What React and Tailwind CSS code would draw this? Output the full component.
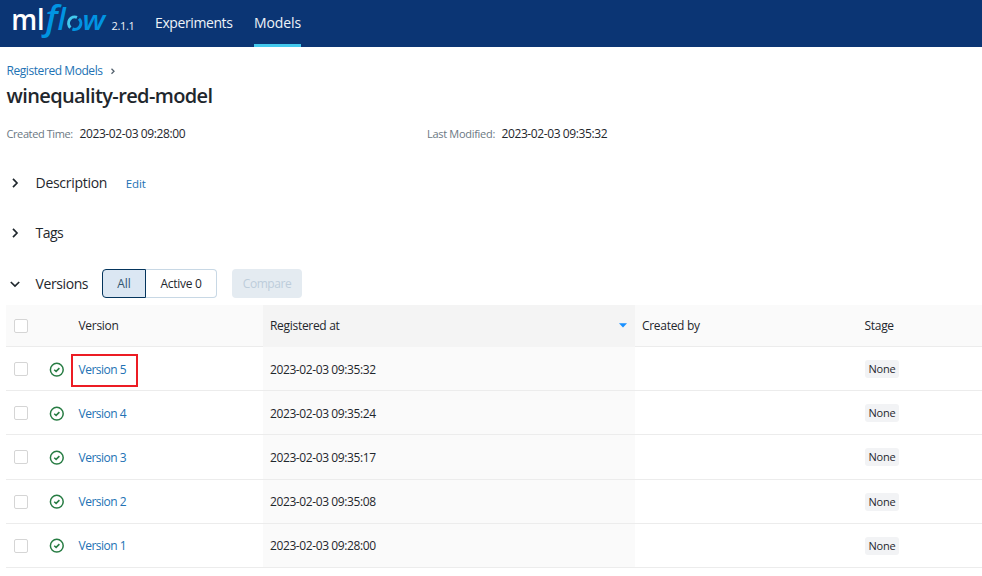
import React from "react";

const versions = [
  { id: 5, registered: "2023-02-03 09:35:32", marked: true },
  { id: 4, registered: "2023-02-03 09:35:24" },
  { id: 3, registered: "2023-02-03 09:35:17" },
  { id: 2, registered: "2023-02-03 09:35:08" },
  { id: 1, registered: "2023-02-03 09:28:00" },
];

const Logo = () => (
  <svg width="96" height="40" viewBox="0 0 96 40" className="shrink-0 overflow-visible" aria-label="mlflow">
    <g fontFamily='"Open Sans", sans-serif'>
      <text transform="translate(-1.8 30)" fontSize="28" fontWeight="600" fill="#fff" textLength="33.5" lengthAdjust="spacingAndGlyphs">ml</text>
      <g fill="#0194e2" fontStyle="italic" fontWeight="600">
        <text transform="translate(32.5 30) scale(1.06 1)" fontSize="33.5">f</text>
        <text transform="translate(44.5 30)" fontSize="30">l</text>
        <text transform="translate(69.5 30) scale(1.14 1)" fontSize="26.5">w</text>
      </g>
    </g>
    <path d="M57.4 27.6A6.2 6.2 0 0 1 64 17.4" fill="none" stroke="#43c9ed" strokeWidth="3" />
    <path d="M66 18.8A6.2 6.2 0 0 1 59.4 29" fill="none" stroke="#0194e2" strokeWidth="3" />
  </svg>
);

const Chevron = ({ open }) => (
  <svg width="10" height="10" viewBox="0 0 10 10" fill="none" stroke="#1f272d" strokeWidth="1.7" className="shrink-0">
    {open ? <path d="M0.8 3 5 7 9.2 3" /> : <path d="M3 0.8 7 5 3 9.2" />}
  </svg>
);

const CheckIcon = () => (
  <svg width="15" height="15" viewBox="0 0 15 15" fill="none" stroke="#277c43" strokeWidth="1.5">
    <circle cx="7.8" cy="7.7" r="6.4" />
    <path d="M5.2 7.8 7.1 9.4 10.4 6.1" />
  </svg>
);

const Checkbox = () => <span className="block size-[14px] rounded-[2px] border border-[#d5d5d5] bg-white" />;

const Section = ({ title, open, tracking, children }) => (
  <div className="flex h-[29px] items-center">
    <div className="flex w-[29.5px] pl-1">
      <Chevron open={open} />
    </div>
    <h2 className={`text-[14px] ${tracking}`}>{title}</h2>
    {children}
  </div>
);

const columns = "grid grid-cols-[43px_22px_192px_372px_222px_1fr] border-b border-[#ececec]";

const App = () => {
  return (
    <div className="h-[576px] w-full overflow-hidden bg-white font-['Open_Sans',sans-serif] text-[12px] text-[#1f272d]">
      <header className="flex h-[47px] bg-[#0b3574] text-[#eef3f8]">
        <div className="flex w-[155px] pl-[13px]">
          <Logo />
          <span className="pt-[18px] pl-[2.5px] text-[11px] leading-4 tracking-[-0.35px]">2.1.1</span>
        </div>
        <nav className="flex text-[14px] leading-[46px]">
          <a className="w-[99px] tracking-[-0.4px]">Experiments</a>
          <a className="w-[47px] border-b-[3px] border-[#43c9ed] tracking-[-0.1px] whitespace-nowrap">Models</a>
        </nav>
      </header>

      <main className="pl-[6px]">
        <div className="mt-[15px] flex h-[18px] items-center gap-[6px] pl-[0.5px] text-[#2272b4]">
          <a className="tracking-[-0.43px]">Registered Models</a>
          <svg width="8" height="8" viewBox="0 0 8 8" fill="none" stroke="#53616d" strokeWidth="1.3">
            <path d="M2.5 1.7 5 4.2 2.5 6.7" />
          </svg>
        </div>
        <h1 className="h-[32px] pl-[0.5px] text-[20px] leading-[32px] font-semibold tracking-[-0.62px]">winequality-red-model</h1>

        <div className="mt-[12px] flex h-[20px] items-center pl-[0.5px]">
          <div className="flex w-[420.5px] items-center">
            <span className="w-[73px] text-[11px] tracking-[-0.4px] text-[#6b7883]">Created Time:</span>
            <span className="tracking-[-0.4px]">2023-02-03 09:28:00</span>
          </div>
          <span className="w-[74.5px] text-[11px] tracking-[-0.3px] text-[#6b7883]">Last Modified:</span>
          <span className="tracking-[-0.4px]">2023-02-03 09:35:32</span>
        </div>

        <div className="mt-6">
          <Section title="Description" tracking="tracking-[-0.28px]">
            <a className="ml-[18.5px] pt-[2px] text-[11.5px] tracking-[-0.1px] text-[#2272b4]">Edit</a>
          </Section>
        </div>
        <div className="mt-[21px]">
          <Section title="Tags" tracking="tracking-[-0.5px]" />
        </div>
        <div className="mt-[22px]">
          <Section title="Versions" open tracking="tracking-[-0.4px]">
            <div className="ml-auto flex h-[29px] w-[880px] text-center">
              <button className="w-[44px] rounded-l-[4px] border border-[#04355d] bg-[#dbe7f3] text-[#33566f]">All</button>
              <button className="w-[71px] rounded-r-[4px] border border-l-0 border-[#c8d8e5] tracking-[-0.3px]">Active 0</button>
              <button className="ml-[15px] w-[70px] rounded-[4px] bg-[#e4ebf1] tracking-[-0.45px] text-[#bdcddb]">Compare</button>
            </div>
          </Section>
        </div>

        <div className="mt-[7px]">
          <div className={`${columns} h-[42px] items-stretch bg-[#fafafa] leading-[42px] font-medium tracking-[-0.3px]`}>
            <div className="flex items-center pl-2"><Checkbox /></div>
            <div />
            <div className="pl-[7.5px]">Version</div>
            <div className="flex items-center justify-between bg-[#f4f4f4] pr-2 pl-[7px]">
              Registered at
              <svg width="8" height="5" viewBox="0 0 8 5" className="-mt-[2px]">
                <path d="M0 .3h8L4 4.6Z" fill="#1890ff" />
              </svg>
            </div>
            <div className="pl-[7px]">Created by</div>
            <div className="pl-[7.5px]">Stage</div>
          </div>

          {versions.map((v) => (
            <div key={v.id} className={`${columns} h-[44.2px]`}>
              <div className="flex items-center pt-px pl-2"><Checkbox /></div>
              <div className="flex items-center pt-px"><CheckIcon /></div>
              <div className="flex items-center">
                {v.marked ? (
                  <a className="mt-[3px] flex h-[33px] w-[67px] items-center border-2 border-[#ec1c24] pb-px pl-[5.5px] tracking-[-0.5px] whitespace-nowrap text-[#2272b4]">Version {v.id}</a>
                ) : (
                  <a className="pt-[2px] pl-[7.5px] tracking-[-0.5px] text-[#2272b4]">Version {v.id}</a>
                )}
              </div>
              <div className="flex items-center bg-[#fafafa] pt-[2px] pl-[7px] tracking-[-0.4px]">{v.registered}</div>
              <div />
              <div className="flex items-center pl-2">
                <span className="mt-px h-[18px] w-[34px] rounded-[3px] bg-[#f2f3f5] text-center text-[11px] leading-[17px] tracking-[-0.2px]">None</span>
              </div>
            </div>
          ))}
        </div>
      </main>
    </div>
  );
};

export default App;
